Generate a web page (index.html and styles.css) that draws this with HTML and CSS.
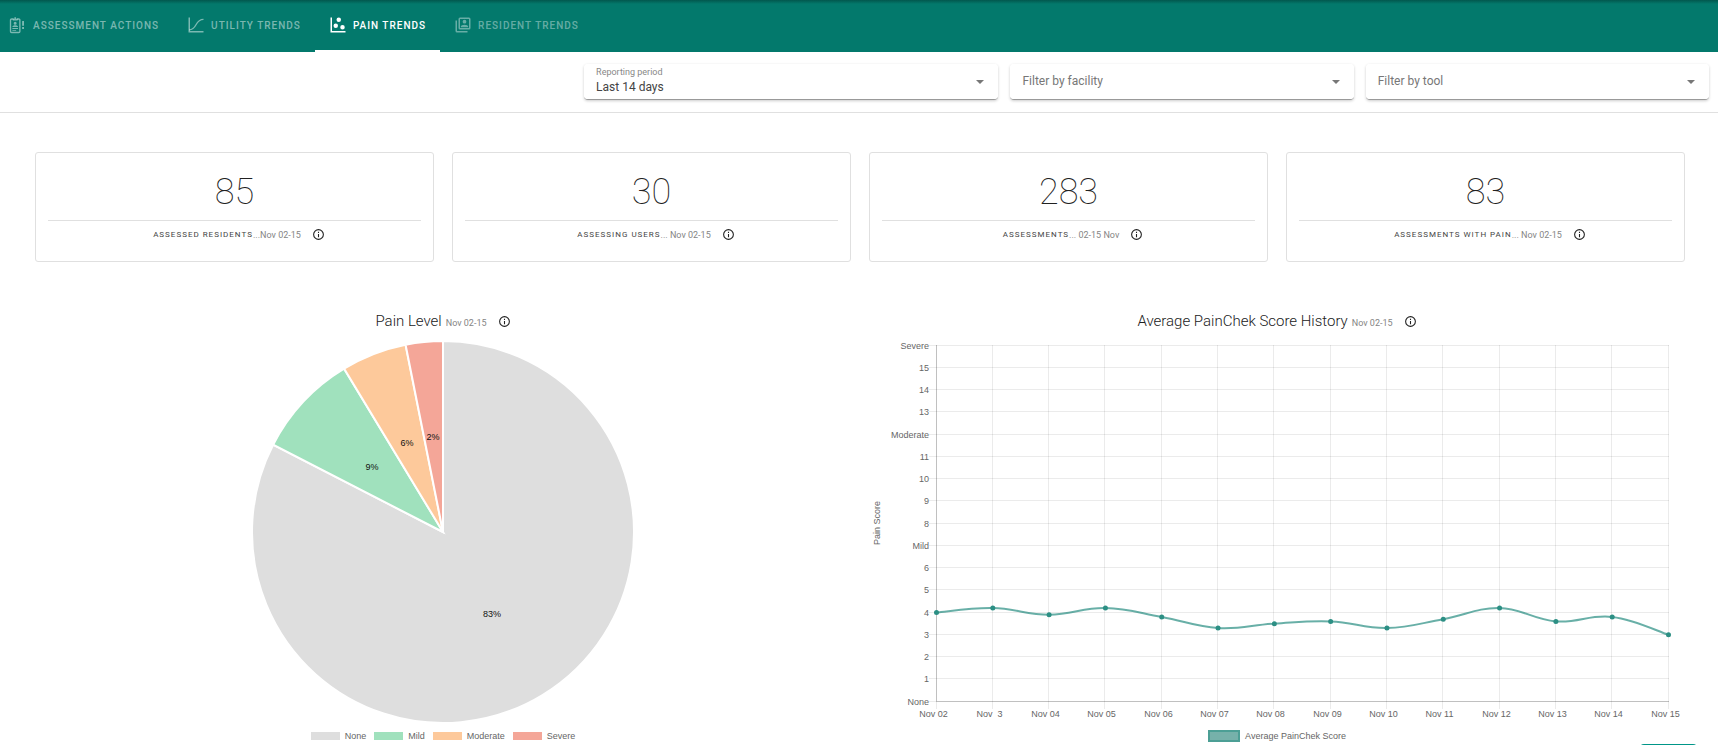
FILE: index.html
```html
<!DOCTYPE html>
<html lang="en">
<head>
    <meta charset="UTF-8">
    <meta name="viewport" content="width=device-width, initial-scale=1.0">
    <title>Pain Trends</title>
    <link rel="stylesheet" href="styles.css">
</head>
<body>
    <!-- Shared icons -->
    <svg class="sprite" aria-hidden="true">
        <symbol id="icon-info" viewBox="0 0 24 24">
            <path d="M11,9H13V7H11M12,20C7.59,20 4,16.41 4,12C4,7.59 7.59,4 12,4C16.41,4 20,7.59 20,12C20,16.41 16.41,20 12,20M12,2A10,10 0 0,0 2,12A10,10 0 0,0 12,22A10,10 0 0,0 22,12A10,10 0 0,0 12,2M11,17H13V11H11V17Z"/>
        </symbol>
        <symbol id="icon-arrow" viewBox="0 0 8 4">
            <path d="M0,0L4,4L8,0Z"/>
        </symbol>
    </svg>

    <nav class="tabs">
        <a class="tab" href="#actions">
            <svg class="tab-icon" viewBox="0 0 24 24">
                <path d="M6 4H3.5A1.5 1.5 0 0 0 2 5.5V20.5A1.5 1.5 0 0 0 3.5 22H13A1.5 1.5 0 0 0 14.500 20.5V5.500A1.500 1.500 0 0 0 13 4H10.500" fill="none" stroke="currentColor" stroke-width="1.800"/>
                <path d="M5 3.500H7.200V1.500H9.300V3.500H11.500V6H5ZM8.200 7.500A2 2 0 1 1 8.200 11.500A2 2 0 1 1 8.200 7.500M4.500 14.500C4.500 11.800 12 11.800 12 14.500ZM4.500 16H12V17.300H4.500ZM4.500 18.500H9.500V19.800H4.500ZM17.500 6.500H20V13H17.500ZM17.500 14.800H20V17.200H17.500Z"/>
            </svg>
            Assessment Actions
        </a>
        <a class="tab" href="#utility">
            <svg class="tab-icon" viewBox="0 0 24 24">
                <path d="M2,2H4V20H22V22H2Z"/>
                <path d="M3 18.500C14 18.500 10 4.500 22 4.500" fill="none" stroke="currentColor" stroke-width="1.800"/>
            </svg>
            Utility Trends
        </a>
        <a class="tab active" href="#pain" aria-current="page">
            <svg class="tab-icon" viewBox="0 0 24 24">
                <path d="M2,2H4V20H22V22H2V2M9,10A3,3 0 0,1 12,13A3,3 0 0,1 9,16A3,3 0 0,1 6,13A3,3 0 0,1 9,10M13,2A3,3 0 0,1 16,5A3,3 0 0,1 13,8A3,3 0 0,1 10,5A3,3 0 0,1 13,2M18,12A3,3 0 0,1 21,15A3,3 0 0,1 18,18A3,3 0 0,1 15,15A3,3 0 0,1 18,12Z"/>
            </svg>
            Pain Trends
        </a>
        <a class="tab muted" href="#resident">
            <svg class="tab-icon" viewBox="0 0 24 24">
                <path d="M4,6H2V20A2,2 0 0,0 4,22H18V20H4V6M20,2H8A2,2 0 0,0 6,4V16A2,2 0 0,0 8,18H20A2,2 0 0,0 22,16V4A2,2 0 0,0 20,2M20,16H8V4H20V16M14,5A2.500,2.500 0 0,1 14,10A2.500,2.500 0 0,1 14,5M9,14.500C9,10.800 19,10.800 19,14.500V15H9Z"/>
            </svg>
            Resident Trends
        </a>
    </nav>

    <form class="filters">
        <div class="field filled">
            <label for="period">Reporting period</label>
            <select id="period">
                <option>Last 14 days</option>
                <option>Last 30 days</option>
            </select>
            <svg class="field-arrow"><use href="#icon-arrow"/></svg>
        </div>
        <div class="field">
            <select id="facility" aria-label="Facility">
                <option>Filter by facility</option>
            </select>
            <svg class="field-arrow"><use href="#icon-arrow"/></svg>
        </div>
        <div class="field">
            <select id="tool" aria-label="Tool">
                <option>Filter by tool</option>
            </select>
            <svg class="field-arrow"><use href="#icon-arrow"/></svg>
        </div>
    </form>

    <main class="content">
        <section class="stats">
            <div class="card">
                <div class="card-value">85</div>
                <div class="card-label">
                    <span class="card-name">Assessed residents</span><span class="date">...Nov 02-15</span>
                    <button class="info" type="button" aria-label="Info"><svg><use href="#icon-info"/></svg></button>
                </div>
            </div>
            <div class="card">
                <div class="card-value">30</div>
                <div class="card-label">
                    <span class="card-name">Assessing users</span><span class="date">... Nov 02-15</span>
                    <button class="info" type="button" aria-label="Info"><svg><use href="#icon-info"/></svg></button>
                </div>
            </div>
            <div class="card">
                <div class="card-value">283</div>
                <div class="card-label">
                    <span class="card-name">Assessments</span><span class="date">... 02-15 Nov</span>
                    <button class="info" type="button" aria-label="Info"><svg><use href="#icon-info"/></svg></button>
                </div>
            </div>
            <div class="card">
                <div class="card-value">83</div>
                <div class="card-label">
                    <span class="card-name">Assessments with pain</span><span class="date">... Nov 02-15</span>
                    <button class="info" type="button" aria-label="Info"><svg><use href="#icon-info"/></svg></button>
                </div>
            </div>
        </section>

        <section class="charts">
            <div class="chart">
                <h2 class="chart-title">
                    Pain Level <span class="date">Nov 02-15</span>
                    <button class="info" type="button" aria-label="Info"><svg><use href="#icon-info"/></svg></button>
                </h2>
                <svg class="plot" id="pie" viewBox="0 0 816 388"></svg>
                <ul class="legend">
                    <li><span class="swatch none"></span>None</li>
                    <li><span class="swatch mild"></span>Mild</li>
                    <li><span class="swatch moderate"></span>Moderate</li>
                    <li><span class="swatch severe"></span>Severe</li>
                </ul>
            </div>
            <div class="chart">
                <h2 class="chart-title">
                    Average PainChek Score History <span class="date">Nov 02-15</span>
                    <button class="info" type="button" aria-label="Info"><svg><use href="#icon-info"/></svg></button>
                </h2>
                <svg class="plot" id="history" viewBox="0 0 816 388"></svg>
                <ul class="legend">
                    <li><span class="swatch score"></span>Average PainChek Score</li>
                </ul>
            </div>
        </section>
    </main>

    <button class="help" type="button" aria-label="Help"></button>

    <script src="charts.js"></script>
</body>
</html>
```
FILE: styles.css
```css
* {
    box-sizing: border-box;
}

body {
    margin: 0;
    background: #fff;
    color: #212121;
    font-family: Roboto, sans-serif;
}

.sprite {
    display: none;
}

/* Tabs */
.tabs {
    display: flex;
    height: 52px;
    padding-left: 9px;
    background: linear-gradient(#02574e, #03796c 4px);
}

.tab {
    display: flex;
    align-items: center;
    gap: 6px;
    padding: 0 14px;
    border-bottom: 2px solid transparent;
    color: rgba(255, 255, 255, 0.48);
    font-size: 10px;
    font-weight: 500;
    letter-spacing: 1px;
    text-transform: uppercase;
    text-decoration: none;
}

.tab:first-child {
    padding-left: 0;
}

.tab.active {
    border-color: #fff;
    color: #fff;
}

.tab.muted {
    color: rgba(255, 255, 255, 0.4);
}

.tab-icon {
    width: 18px;
    height: 18px;
    fill: currentColor;
}

/* Filters */
.filters {
    display: grid;
    grid-template-columns: 414fr 343fr 343fr;
    gap: 12px;
    padding: 12px 9px 12px 34%;
    border-bottom: 1px solid #e0e0e0;
}

.field {
    position: relative;
    height: 36px;
    border-bottom: 1px solid #999;
    border-radius: 4px;
    box-shadow: 0 1px 3px rgba(0, 0, 0, 0.2);
}

.field select {
    width: 100%;
    height: 100%;
    padding: 0 12px 2px;
    border: 0;
    border-radius: 4px;
    background: #fff;
    color: #777;
    font-family: inherit;
    font-size: 12px;
    letter-spacing: inherit;
    appearance: none;
}

.field.filled select {
    padding-top: 13px;
    color: #444;
}

.field label {
    position: absolute;
    top: 2px;
    left: 12px;
    color: #888;
    font-size: 9px;
    line-height: 12px;
}

.field-arrow {
    position: absolute;
    top: 16px;
    right: 14px;
    width: 8px;
    height: 4px;
    fill: #777;
    pointer-events: none;
}

/* Stat cards */
.content {
    padding: 39px 33px 0 35px;
}

.stats {
    display: grid;
    grid-template-columns: repeat(4, 1fr);
    gap: 18px;
}

.card {
    height: 110px;
    padding: 12px;
    border: 1px solid #e0e0e0;
    border-radius: 3px;
    text-align: center;
}

.card-value {
    height: 56px;
    border-bottom: 1px solid #e0e0e0;
    font-size: 36px;
    font-weight: 100;
    line-height: 54px;
}

.card-label {
    display: flex;
    justify-content: center;
    align-items: center;
    height: 27px;
    padding-left: 9px;
}

.card-name {
    color: #444;
    font-size: 8px;
    letter-spacing: 1px;
    text-transform: uppercase;
}

.date {
    color: #858585;
    font-size: 9px;
    font-weight: 400;
    white-space: pre;
}

.info {
    margin: 0 0 0 11px;
    padding: 0;
    border: 0;
    background: none;
    color: #212121;
}

.info svg {
    display: block;
    width: 13px;
    height: 13px;
    fill: currentColor;
}

/* Charts */
.charts {
    display: grid;
    grid-template-columns: 1fr 1fr;
    gap: 18px;
    margin-top: 47px;
}

.chart-title {
    display: flex;
    justify-content: center;
    align-items: center;
    height: 24px;
    margin: 0;
    font-size: 15px;
    font-weight: 300;
}

.chart-title .date {
    margin: 4px 0 0 4px;
}

.plot {
    display: block;
    width: 100%;
    margin-top: 3px;
}

.plot text {
    fill: #666;
    font-family: "Liberation Sans", Arial, sans-serif;
    font-size: 9px;
}

.plot .slice {
    stroke: #fff;
    stroke-width: 2;
}

.plot .slice-label {
    fill: #111;
    text-anchor: middle;
}

.plot .grid-line {
    stroke: rgba(0, 0, 0, 0.08);
}

.plot .axis {
    stroke: rgba(0, 0, 0, 0.18);
}

.plot .line {
    fill: none;
    stroke: rgba(3, 121, 108, 0.6);
    stroke-width: 2;
}

.plot .point {
    fill: #2c8f84;
}

.plot .y-label {
    text-anchor: end;
}

.plot .x-label {
    text-anchor: middle;
}

.legend {
    display: flex;
    justify-content: center;
    gap: 8px;
    height: 24px;
    margin: 0;
    padding: 0;
    color: #666;
    font-family: "Liberation Sans", Arial, sans-serif;
    font-size: 9px;
    line-height: 24px;
    list-style: none;
}

.legend li {
    display: flex;
    align-items: center;
    gap: 5px;
}

.swatch {
    width: 29px;
    height: 8px;
}

.swatch.none {
    background: #dedede;
}

.swatch.mild {
    background: #a0e1bd;
}

.swatch.moderate {
    background: #fdc99b;
}

.swatch.severe {
    background: #f4a698;
}

.swatch.score {
    width: 32px;
    height: 12px;
    border: 2px solid #4c9f95;
    background: #76b1aa;
}

/* Help tab that sits just under the bottom edge */
.help {
    position: fixed;
    right: 21px;
    bottom: -31px;
    width: 57px;
    height: 32px;
    border: 0;
    border-radius: 4px;
    background: #009688;
}
```
FILE: charts.js
```js
const SVG_NS = 'http://www.w3.org/2000/svg';

function add(parent, tag, attrs, text) {
    const el = document.createElementNS(SVG_NS, tag);
    for (const key in attrs) {
        el.setAttribute(key, attrs[key]);
    }
    if (text !== undefined) {
        el.textContent = text;
    }
    parent.appendChild(el);
    return el;
}

// Angles are in degrees, clockwise from the top
const slices = [
    { label: '83%', from: 0, to: 297.2, color: '#dedede', at: [457, 278] },
    { label: '9%', from: 297.2, to: 328.8, color: '#a0e1bd', at: [337, 131] },
    { label: '6%', from: 328.8, to: 348.7, color: '#fdc99b', at: [372, 107] },
    { label: '2%', from: 348.7, to: 360, color: '#f4a698', at: [398, 101] }
];

function drawPie() {
    const svg = document.getElementById('pie');
    const cx = 408, cy = 196, r = 191;
    const point = deg => {
        const a = deg * Math.PI / 180;
        return `${cx + r * Math.sin(a)},${cy - r * Math.cos(a)}`;
    };

    slices.forEach(s => {
        const large = s.to - s.from > 180 ? 1 : 0;
        add(svg, 'path', {
            class: 'slice',
            fill: s.color,
            d: `M${cx},${cy}L${point(s.from)}A${r},${r} 0 ${large} 1 ${point(s.to)}Z`
        });
    });
    slices.forEach(s => {
        add(svg, 'text', { class: 'slice-label', x: s.at[0], y: s.at[1] + 3 }, s.label);
    });
}

const scores = [4, 4.2, 3.9, 4.2, 3.8, 3.3, 3.5, 3.6, 3.3, 3.7, 4.2, 3.6, 3.8, 3];
const days = ['Nov 02', 'Nov  3', 'Nov 04', 'Nov 05', 'Nov 06', 'Nov 07', 'Nov 08',
    'Nov 09', 'Nov 10', 'Nov 11', 'Nov 12', 'Nov 13', 'Nov 14', 'Nov 15'];
const levels = { 0: 'None', 7: 'Mild', 12: 'Moderate', 16: 'Severe' };

function drawHistory() {
    const svg = document.getElementById('history');
    const left = 67, right = 799, top = 9, bottom = 365;
    const x = i => left + (right - left) * i / (days.length - 1);
    const y = v => bottom - (bottom - top) * v / 16;
    const crisp = n => Math.floor(n) + 0.5;

    for (let v = 0; v <= 16; v++) {
        const gy = crisp(y(v));
        add(svg, 'line', { class: 'grid-line', x1: left - 7, x2: right + 1, y1: gy, y2: gy });
        add(svg, 'text', { class: 'y-label', x: left - 7, y: gy + 3 }, levels[v] || v);
    }
    days.forEach((day, i) => {
        const gx = crisp(x(i));
        add(svg, 'line', { class: 'grid-line', x1: gx, x2: gx, y1: top, y2: bottom + 8 });
        add(svg, 'text', { class: 'x-label', x: gx - 3, y: bottom + 16, style: 'white-space: pre' }, day);
    });
    add(svg, 'line', { class: 'axis', x1: left + 0.5, x2: left + 0.5, y1: top, y2: bottom });
    add(svg, 'line', { class: 'axis', x1: left, x2: right + 1, y1: bottom + 0.5, y2: bottom + 0.5 });
    add(svg, 'text', { class: 'x-label', transform: 'translate(11 187) rotate(-90)' }, 'Pain Score');

    // Smooth curve, each tangent runs parallel to the neighbouring points
    const pts = scores.map((s, i) => [x(i) + 0.5, y(s) + 0.5]);
    const tangent = i => {
        const a = pts[Math.max(i - 1, 0)];
        const b = pts[Math.min(i + 1, pts.length - 1)];
        return [(b[0] - a[0]) * 0.2, (b[1] - a[1]) * 0.2];
    };
    let d = `M${pts[0]}`;
    for (let i = 1; i < pts.length; i++) {
        const t0 = tangent(i - 1), t1 = tangent(i);
        const p0 = pts[i - 1], p1 = pts[i];
        d += `C${p0[0] + t0[0]},${p0[1] + t0[1]} ${p1[0] - t1[0]},${p1[1] - t1[1]} ${p1}`;
    }
    add(svg, 'path', { class: 'line', d });
    pts.forEach(p => add(svg, 'circle', { class: 'point', cx: p[0], cy: p[1], r: 2.5 }));
}

drawPie();
drawHistory();
```
